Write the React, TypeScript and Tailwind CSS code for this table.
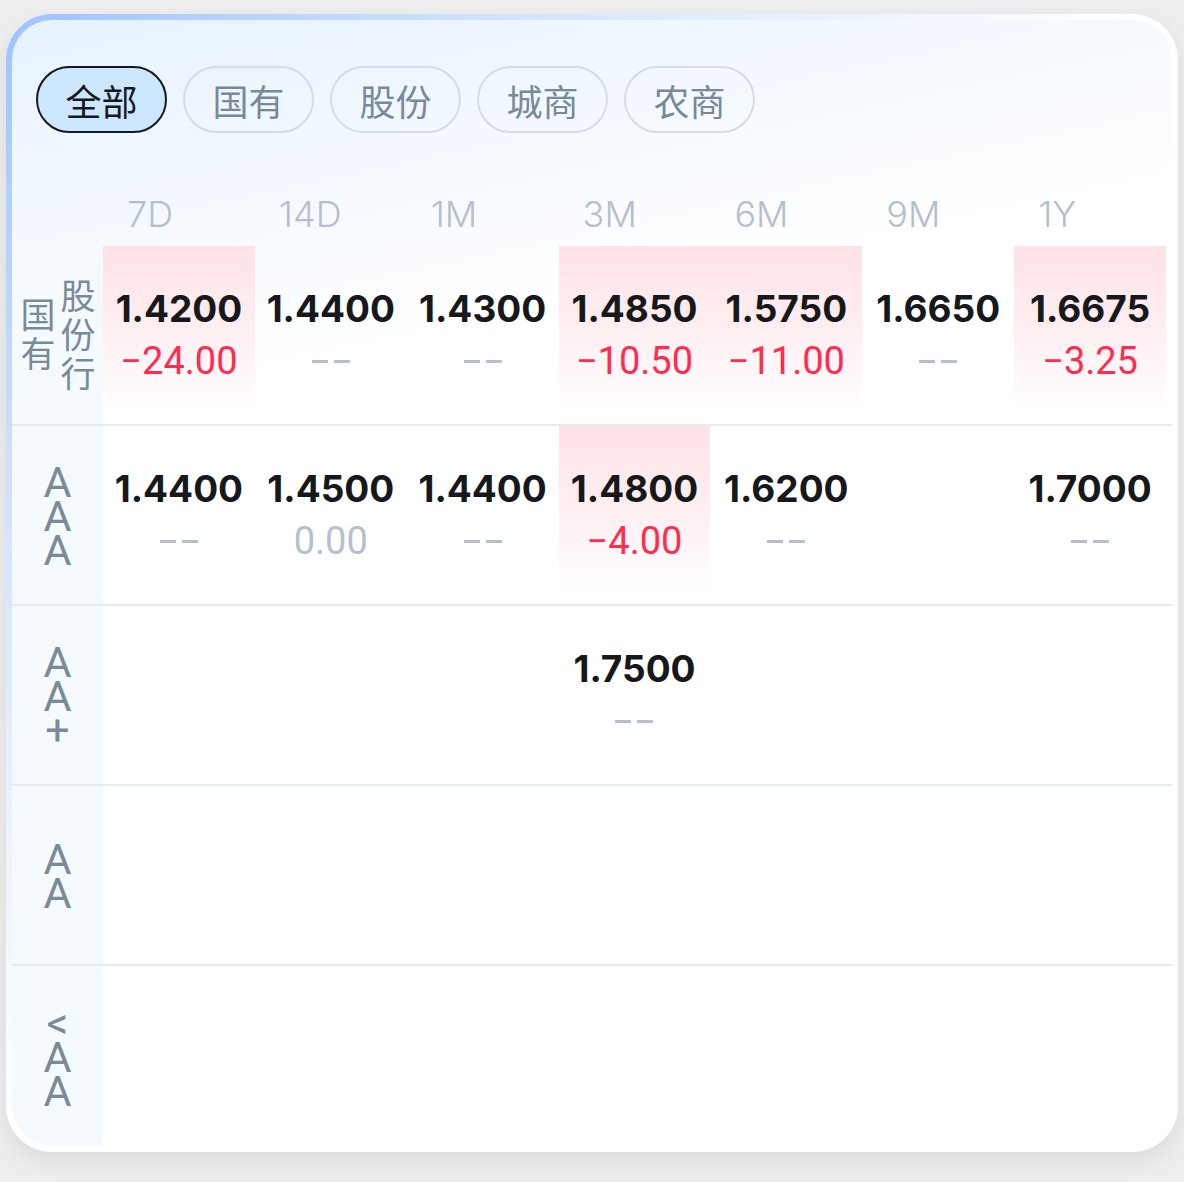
import React from "react";

type Cell = { v: string; d: string; hl?: boolean; dColor?: "red" | "gray" } | null;

const cols = ["7D", "14D", "1M", "3M", "6M", "9M", "1Y"];

const rows: { label: React.ReactNode; cells: Cell[] }[] = [
  {
    label: (
      <div className="flex items-center gap-[4px]">
        <div className="[writing-mode:vertical-lr] text-[35px] leading-[36px] tracking-[4px] pt-[2px]">国有</div>
        <div className="[writing-mode:vertical-lr] text-[35px] leading-[36px] tracking-[4px] pt-[2px]">股份行</div>
      </div>
    ),
    cells: [
      { v: "1.4200", d: "−24.00", hl: true, dColor: "red" },
      { v: "1.4400", d: "--" },
      { v: "1.4300", d: "--" },
      { v: "1.4850", d: "−10.50", hl: true, dColor: "red" },
      { v: "1.5750", d: "−11.00", hl: true, dColor: "red" },
      { v: "1.6650", d: "--" },
      { v: "1.6675", d: "−3.25", hl: true, dColor: "red" },
    ],
  },
  {
    label: "AAA",
    cells: [
      { v: "1.4400", d: "--" },
      { v: "1.4500", d: "0.00", dColor: "gray" },
      { v: "1.4400", d: "--" },
      { v: "1.4800", d: "−4.00", hl: true, dColor: "red" },
      { v: "1.6200", d: "--" },
      null,
      { v: "1.7000", d: "--" },
    ],
  },
  {
    label: "AA+",
    cells: [null, null, null, { v: "1.7500", d: "--" }, null, null, null],
  },
  { label: "AA", cells: [null, null, null, null, null, null, null] },
  { label: "<AA", cells: [null, null, null, null, null, null, null] },
];

const tabs = ["全部", "国有", "股份", "城商", "农商"];

function VerticalLatin({ text }: { text: string }) {
  return (
    <div className="[writing-mode:vertical-lr] [text-orientation:upright] text-[43px] leading-[48px] tracking-[-16px] pb-[14px] font-['Roboto',sans-serif]">
      {text}
    </div>
  );
}

function Dash() {
  return (
    <span className="flex items-center gap-[6px]">
      <span className="block w-[16px] h-[3px] bg-[#b4bfcf]" />
      <span className="block w-[16px] h-[3px] bg-[#b4bfcf]" />
    </span>
  );
}

export default function App() {
  return (
    <div className="w-full h-[1182px] bg-[#efefef] pt-[14px] pl-[6px] overflow-hidden">
      <div className="w-[1172px] h-[1138px] rounded-[46px] p-[6px] bg-[linear-gradient(135deg,#9ec3ff_0%,#d3e4ff_22%,#ffffff_48%)] shadow-[0_10px_30px_rgba(0,0,0,0.09)]">
        <div className="h-full rounded-[40px] overflow-hidden bg-[linear-gradient(168deg,#e6f2ff_0%,#f6faff_18%,#ffffff_30%)] flex flex-col">
          {/* tabs */}
          <div className="flex gap-[16px] pt-[46px] pl-[24px]">
            {tabs.map((t, i) => (
              <div
                key={t}
                className={
                  i === 0
                    ? "w-[131px] h-[67px] rounded-full border-2 border-[#15181c] bg-[#cde7ff] text-[#15181c] flex items-center justify-center text-[36px] font-['Noto_Sans_CJK_SC',sans-serif]"
                    : "w-[131px] h-[67px] rounded-full border-2 border-[#d5dce4] text-[#788999] flex items-center justify-center text-[36px] font-['Noto_Sans_CJK_SC',sans-serif]"
                }
              >
                {t}
              </div>
            ))}
          </div>
          {/* header */}
          <div className="mt-[49px] h-[64px] grid grid-cols-[91px_repeat(7,1fr)] pr-[6px] items-center">
            <div />
            {cols.map((c) => (
              <div
                key={c}
                className="pl-[24px] text-[36px] font-light text-[#b4bfce] font-['Inter',sans-serif] leading-none"
              >
                {c}
              </div>
            ))}
          </div>
          {/* rows */}
          <div className="flex-1 flex flex-col">
            {rows.map((r, ri) => (
              <div
                key={ri}
                className={
                  ri < rows.length - 1
                    ? "h-[180px] border-b-2 border-[#e6ebf0] grid grid-cols-[91px_repeat(7,1fr)] pr-[6px]"
                    : "flex-1 grid grid-cols-[91px_repeat(7,1fr)] pr-[6px]"
                }
              >
                <div className="bg-[#f5faff] flex items-center justify-center text-[#798a99] text-[35px] font-['Noto_Sans_CJK_SC',sans-serif]">
                  {typeof r.label === "string" ? <VerticalLatin text={r.label} /> : r.label}
                </div>
                {r.cells.map((c, ci) => (
                  <div
                    key={ci}
                    className={
                      c && c.hl
                        ? "flex flex-col items-center justify-center bg-[linear-gradient(180deg,#ffe2e7_0%,#fff0f2_50%,#ffffff_93%)]"
                        : "flex flex-col items-center justify-center"
                    }
                  >
                    {c && (
                      <>
                        <div className="h-[52px] leading-[52px] text-[37px] font-bold text-[#16181c] font-['Inter',sans-serif]">
                          {c.v}
                        </div>
                        <div
                          className={
                            c.dColor === "red"
                              ? "h-[52px] flex items-center leading-[52px] text-[38px] text-[#ff2b50] font-['Roboto',sans-serif]"
                              : "h-[52px] flex items-center leading-[52px] text-[38px] text-[#b4bfcf] font-['Roboto',sans-serif]"
                          }
                        >
                          {c.d === "--" ? <Dash /> : c.d}
                        </div>
                      </>
                    )}
                  </div>
                ))}
              </div>
            ))}
          </div>
        </div>
      </div>
    </div>
  );
}
